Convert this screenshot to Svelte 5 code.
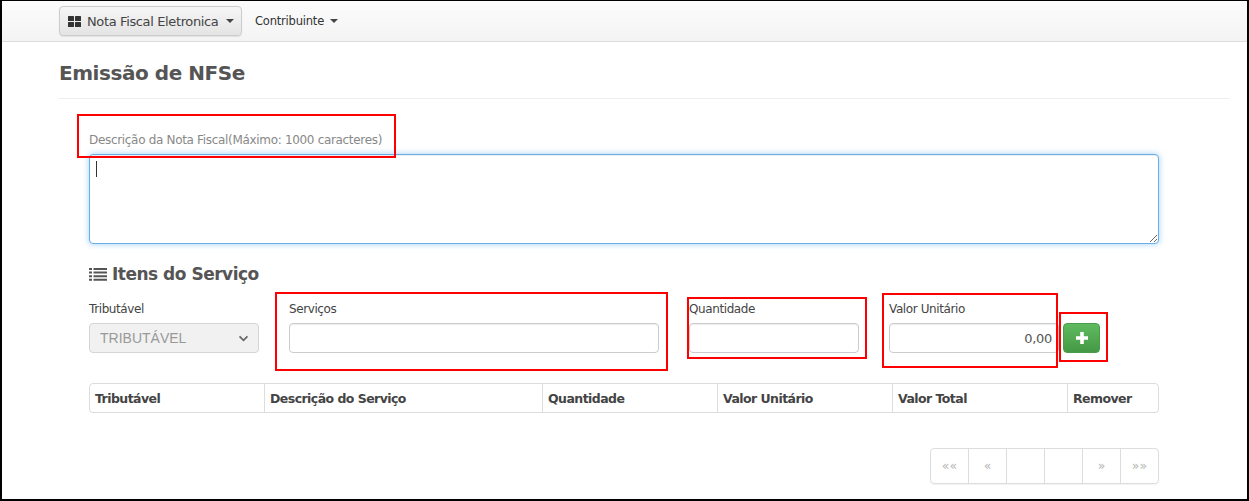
<script>
  const columns = [
    { label: 'Tributável', width: 175 },
    { label: 'Descrição do Serviço', width: 278 },
    { label: 'Quantidade', width: 175 },
    { label: 'Valor Unitário', width: 175 },
    { label: 'Valor Total', width: 175 },
    { label: 'Remover', width: 92 }
  ];
  const pages = ['««', '«', '', '', '»', '»»'];
</script>

<div class="frame">
  <nav class="navbar">
    <button class="brand">
      <svg class="grid-icon" viewBox="0 0 13 11" width="13" height="11" aria-hidden="true">
        <rect x="0" y="0" width="6" height="5" rx="0.5" />
        <rect x="7" y="0" width="6" height="5" rx="0.5" />
        <rect x="0" y="6" width="6" height="5" rx="0.5" />
        <rect x="7" y="6" width="6" height="5" rx="0.5" />
      </svg>
      <span>Nota Fiscal Eletronica</span>
      <i class="caret"></i>
    </button>
    <div class="menu">Contribuinte <i class="caret"></i></div>
  </nav>

  <main class="page">
    <h1>Emissão de NFSe</h1>
    <div class="content">
      <div class="desc-label mark-host">
        <label for="desc">Descrição da Nota Fiscal(Máximo: 1000 caracteres)</label>
        <b class="mark m-desc"></b>
      </div>
      <div class="area-wrap">
        <textarea id="desc"></textarea>
        <i class="cursor"></i>
      </div>

      <h2>
        <svg viewBox="0 0 18 14" width="18" height="14" aria-hidden="true">
          <path d="M0 1h3v2H0zM4.500 1H18v2H4.500zM0 4.600h3v2H0zM4.500 4.600H18v2H4.500zM0 8.200h3v2H0zM4.500 8.200H18v2H4.500zM0 11.800h3v2H0zM4.500 11.800H18v2H4.500z" />
        </svg>
        Itens do Serviço
      </h2>

      <div class="fields">
        <div class="field f-trib">
          <label for="trib">Tributável</label>
          <div class="select">
            <span id="trib">TRIBUTÁVEL</span>
            <svg viewBox="0 0 12 8" width="11" height="7" aria-hidden="true"><path d="M1.500 1.500 6 6l4.500-4.500" /></svg>
          </div>
        </div>
        <div class="field f-serv mark-host">
          <label for="serv">Serviços</label>
          <input id="serv" />
          <b class="mark m-serv"></b>
        </div>
        <div class="field f-qty mark-host">
          <label for="qty">Quantidade</label>
          <input id="qty" />
          <b class="mark m-qty"></b>
        </div>
        <div class="field f-val mark-host">
          <label for="val">Valor Unitário</label>
          <input id="val" class="right" value="0,00" />
          <b class="mark m-val"></b>
        </div>
        <div class="add mark-host">
          <button class="plus" aria-label="Adicionar">
            <svg viewBox="1 1 10 10" width="12" height="12" aria-hidden="true"><path d="M4.500 1h3v3.500H11v3H7.500V11h-3V7.500H1v-3h3.500z" /></svg>
          </button>
          <b class="mark m-add"></b>
        </div>
      </div>

      <div class="table">
        {#each columns as c}
          <div class="th" style="width:{c.width}px">{c.label}</div>
        {/each}
      </div>

      <div class="pager">
        {#each pages as p}
          <span class="pg">{p}</span>
        {/each}
      </div>
    </div>
  </main>
</div>

<style>
  :global(body) { margin: 0; background: #fff; }
  .frame {
    box-sizing: border-box;
    width: 1249px;
    height: 501px;
    border: solid #000;
    border-width: 1px 2px 2px 2px;
    overflow: hidden;
    font-family: "DejaVu Sans", Verdana, sans-serif;
    color: #555;
    background: #fff;
  }
  .navbar {
    box-sizing: border-box;
    height: 41px;
    padding: 5px 0 0 57px;
    display: flex;
    align-items: flex-start;
    background: linear-gradient(#fbfbfb, #f4f4f4);
    border-bottom: 1px solid #ddd;
  }
  .brand {
    box-sizing: border-box;
    width: 183px;
    height: 30px;
    padding: 0 0 0 8px;
    display: flex;
    align-items: center;
    gap: 6px;
    font: 13px "DejaVu Sans", Verdana, sans-serif;
    letter-spacing: -0.37px;
    color: #444;
    background: linear-gradient(#f6f6f6, #e4e4e4);
    border: 1px solid #ccc;
    border-radius: 4px;
    box-shadow: 0 1px 1px rgba(0,0,0,.08);
  }
  .grid-icon { fill: #333; flex: none; }
  .caret {
    display: inline-block;
    width: 0;
    height: 0;
    border-left: 4px solid transparent;
    border-right: 4px solid transparent;
    border-top: 4px solid #444;
    vertical-align: 2px;
    margin-left: 2px;
  }
  .menu {
    margin-left: 13px;
    height: 30px;
    line-height: 30px;
    font-size: 11.5px;
    letter-spacing: -0.2px;
    color: #333;
    white-space: nowrap;
  }
  .page { margin: 0 18px 0 57px; }
  h1 {
    margin: 0;
    height: 57px;
    box-sizing: border-box;
    padding-top: 17px;
    font-size: 20px;
    line-height: 28px;
    font-weight: 700;
    letter-spacing: -0.45px;
    color: #555;
    border-bottom: 1px solid #eee;
  }
  .content { padding: 0 70px 0 30px; }
  .mark-host { position: relative; }
  .mark {
    position: absolute;
    z-index: 2;
    box-sizing: border-box;
    border: 2px solid #f00;
    pointer-events: none;
  }
  .desc-label { padding-top: 33px; height: 22px; }
  .desc-label label {
    display: block;
    font-size: 12px;
    line-height: 16px;
    letter-spacing: -0.32px;
    color: #888;
    white-space: nowrap;
  }
  .m-desc { left: -12px; top: 15px; width: 319px; height: 44px; }
  .area-wrap { position: relative; }
  textarea {
    display: block;
    box-sizing: border-box;
    width: 1070px;
    height: 90px;
    margin-top: 0;
    border: 1px solid #66afe9;
    border-radius: 4px;
    outline: none;
    box-shadow: inset 0 1px 1px rgba(0,0,0,.075), 0 0 6px rgba(102,175,233,.6);
    background: #fff;
  }
  .cursor {
    position: absolute;
    left: 7px;
    top: 7px;
    width: 1px;
    height: 16px;
    background: #333;
  }
  h2 {
    display: flex;
    align-items: center;
    gap: 5px;
    margin: 17px 0 0;
    height: 26px;
    font-size: 17px;
    font-weight: 700;
    letter-spacing: -0.5px;
    color: #555;
  }
  h2 svg { fill: #555; flex: none; }
  .fields { display: flex; margin-top: 14px; height: 60px; align-items: flex-start; }
  .field label {
    display: block;
    height: 22px;
    font-size: 12px;
    line-height: 16px;
    letter-spacing: -0.4px;
    color: #444;
    white-space: nowrap;
  }
  .f-trib { width: 170px; margin-right: 30px; }
  .f-serv { width: 370px; margin-right: 30px; }
  .f-qty { width: 170px; margin-right: 30px; }
  .f-val { width: 170px; margin-right: 4px; }
  .select {
    box-sizing: border-box;
    height: 30px;
    padding: 0 10px;
    display: flex;
    align-items: center;
    justify-content: space-between;
    font: 14px "Liberation Sans", Arial, sans-serif;
    color: #999;
    background: #f1f1f1;
    border: 1px solid #d5d5d5;
    border-radius: 4px;
  }
  .select svg { fill: none; stroke: #666; stroke-width: 2; margin-right: -1px; }
  input {
    display: block;
    box-sizing: border-box;
    width: 100%;
    height: 30px;
    padding: 0 6px;
    font: 13px "DejaVu Sans", Verdana, sans-serif;
    letter-spacing: -0.3px;
    color: #555;
    border: 1px solid #ccc;
    border-radius: 4px;
    box-shadow: inset 0 1px 1px rgba(0,0,0,.075);
    outline: none;
  }
  input.right { text-align: right; }
  .add { padding-top: 22px; }
  .plus {
    display: flex;
    align-items: center;
    justify-content: center;
    box-sizing: border-box;
    width: 37px;
    height: 30px;
    padding: 0;
    background: linear-gradient(#5fbb5f, #459945);
    border: 1px solid #4a9c4a;
    border-radius: 4px;
  }
  .plus svg { fill: #fff; }
  .m-serv { left: -14px; top: -9px; width: 393px; height: 79px; }
  .m-qty { left: -2px; top: -4px; width: 180px; height: 62px; }
  .m-val { left: -7px; top: -8px; width: 176px; height: 75px; }
  .m-add { left: -4px; top: 11px; width: 49px; height: 50px; }
  .table {
    display: flex;
    box-sizing: border-box;
    width: 1070px;
    height: 30px;
    margin-top: 22px;
    border: 1px solid #ddd;
    border-radius: 4px;
  }
  .th {
    box-sizing: border-box;
    padding-left: 5px;
    line-height: 29px;
    font-size: 12.500px;
    font-weight: 700;
    letter-spacing: -0.55px;
    color: #444;
    border-right: 1px solid #ddd;
    white-space: nowrap;
  }
  .th:last-child { border-right: 0; flex: 1; }
  .pager {
    display: flex;
    box-sizing: border-box;
    width: 229px;
    height: 36px;
    margin: 35px 0 0 841px;
    border: 1px solid #ddd;
    border-radius: 4px;
    box-shadow: 0 1px 1px rgba(0,0,0,.05);
  }
  .pg {
    flex: 1;
    text-align: center;
    line-height: 34px;
    font-size: 12.500px;
    color: #b5b5b5;
    border-right: 1px solid #ddd;
  }
  .pg:last-child { border-right: 0; }
</style>
